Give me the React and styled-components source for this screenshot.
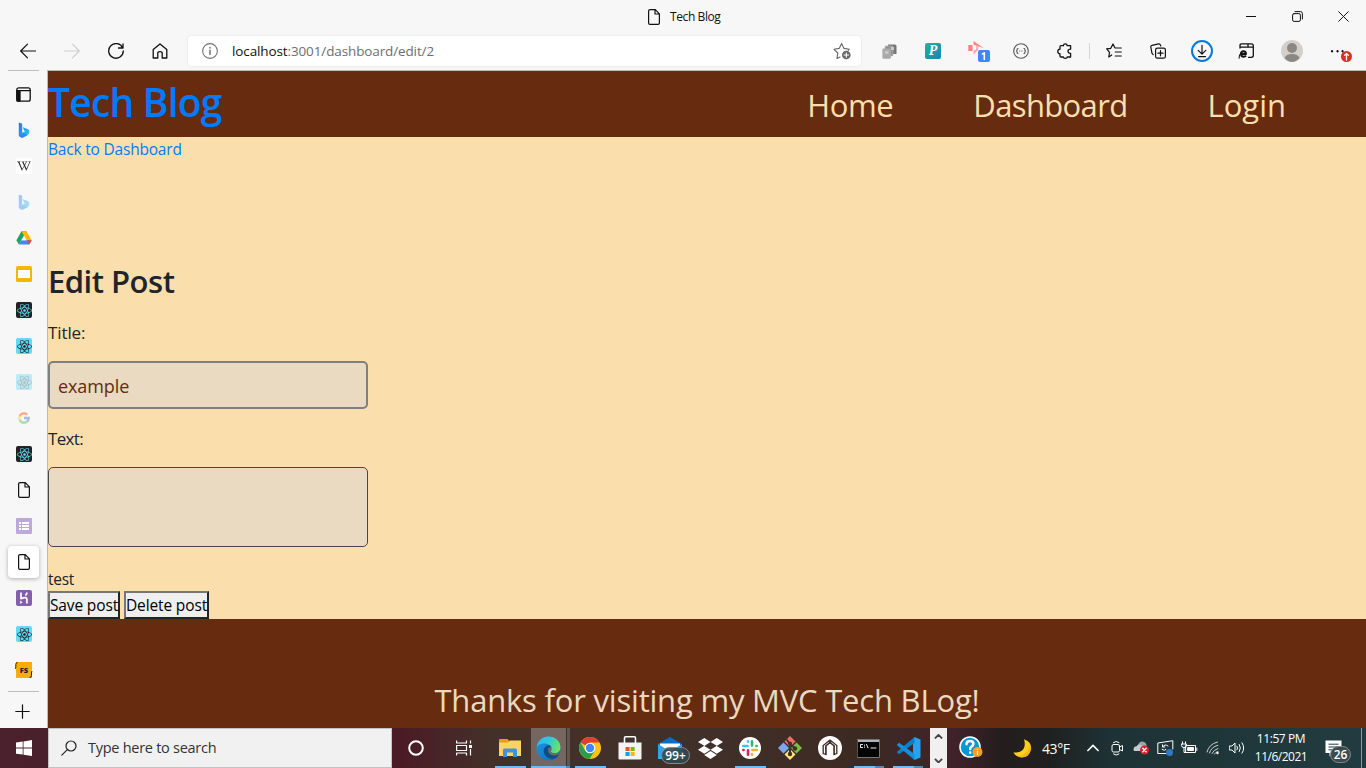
import React from 'react';
import styled, { createGlobalStyle, css } from 'styled-components';
import { FaReact, FaWikipediaW, FaDropbox } from 'react-icons/fa';
import { FcGoogle } from 'react-icons/fc';

const Global = createGlobalStyle`
  *, *::before, *::after { box-sizing: border-box; }
  body {
    margin: 0;
    overflow: hidden;
    font-family: "Open Sans", "Noto Sans", sans-serif;
    background: #f7f7f7;
  }
  svg { display: block; flex: none; }
`;

const Text = styled.span`
  display: block;
  width: max-content;
  white-space: nowrap;
  font-size: ${p => p.$size}px;
  line-height: ${p => p.$lh || p.$size * 1.5}px;
  letter-spacing: ${p => p.$ls || 0}px;
  font-weight: ${p => p.$weight || 400};
  color: ${p => p.$color || 'inherit'};
`;

const Screen = styled.div`
  width: 1366px;
  height: 768px;
  display: flex;
  flex-direction: column;
  background: #f7f7f7;
`;

const TitleBar = styled.div`
  height: 33px;
  display: flex;
  align-items: center;
  padding-left: 648px;
`;
const TabTitle = styled.div`
  display: flex;
  align-items: center;
  gap: 10px;
  flex: 1;
`;
const WindowButtons = styled.div`
  display: flex;
`;
const WindowButton = styled.div`
  width: 46px;
  display: flex;
  justify-content: center;
`;

const Toolbar = styled.div`
  height: 37px;
  display: flex;
  align-items: center;
  padding: 0 0 1px 6px;
`;
const ToolButton = styled.div`
  width: ${p => p.$w || 44}px;
  height: 34px;
  flex: none;
  display: flex;
  align-items: center;
  justify-content: center;
`;
const AddressBar = styled.div`
  width: 673px;
  height: 30px;
  flex: none;
  margin-left: 6px;
  padding: 0 10px 0 14px;
  display: flex;
  align-items: center;
  gap: 14px;
  border-radius: 4px;
  background: #fff;
  box-shadow: 0 0 3px rgba(0, 0, 0, 0.09);
`;
const Url = styled.div`
  flex: 1;
  display: flex;
`;
const ToolDivider = styled.div`
  width: 1px;
  height: 16px;
  flex: none;
  background: #d5d5d5;
`;

const Middle = styled.div`
  height: 658px;
  display: flex;
`;
const Sidebar = styled.aside`
  width: 47px;
  display: flex;
  flex-direction: column;
  align-items: center;
`;
const SideRule = styled.div`
  width: 31px;
  height: 1px;
  flex: none;
  background: #bdbdbd;
`;
const SideTabs = styled.div`
  padding-top: 7px;
  display: flex;
  flex-direction: column;
  gap: 4px;
  height: 620px;
  flex: none;
`;
const SideTab = styled.div`
  width: 31px;
  height: 32px;
  padding-left: 1px;
  display: flex;
  align-items: center;
  justify-content: center;
  border-radius: 4px;
  opacity: ${p => (p.$faded ? 0.4 : 1)};
  ${p => p.$active && css`
    background: #fff;
    box-shadow: 0 1px 4px rgba(0, 0, 0, 0.3);
  `}
`;
const Tile = styled.div`
  width: 16px;
  height: 16px;
  display: flex;
  align-items: center;
  justify-content: center;
  border-radius: 2px;
  background: ${p => p.$bg};
  color: ${p => p.$fg};
  font-size: ${p => p.$size || 15}px;
`;
const NewTab = styled.div`
  height: 36px;
  display: flex;
  align-items: center;
  padding: 3px 2px 0 0;
`;

const Page = styled.main`
  flex: 1;
  height: 658px;
  border-top: 1px solid #bababa;
  border-left: 1px solid #bababa;
  display: flex;
  flex-direction: column;
  background: #fadfad;
  color: #212529;
`;
const Header = styled.header`
  height: 66px;
  display: flex;
  justify-content: space-between;
  align-items: flex-start;
  padding-right: 80px;
  background: #672b10;
`;
const Nav = styled.nav`
  display: flex;
  gap: 80px;
  padding-top: 10px;
`;
const Content = styled.section`
  height: 482px;
  display: flex;
  flex-direction: column;
  align-items: flex-start;
`;
const Heading = styled.div`
  margin-top: 96px;
  height: 49px;
`;
const Field = styled.div`
  display: flex;
  flex-direction: column;
`;
const FieldLabel = styled.div`
  height: 46px;
  padding-top: 4px;
`;
const InputBox = styled.div`
  width: 320px;
  height: 48px;
  padding: 9px 8px;
  border: 2px solid #808080;
  border-radius: 5px;
  background: #e9dac1;
`;
const TextBox = styled(InputBox)`
  height: 80px;
  border: 1px solid #45474a;
`;
const Gap = styled.div`
  height: ${p => p.$h}px;
`;
const Buttons = styled.div`
  display: flex;
  gap: 4px;
`;
const PostButton = styled.div`
  width: ${p => p.$w}px;
  height: 28px;
  display: flex;
  justify-content: center;
  border: 2px solid;
  border-color: #767676 #212529 #212529 #767676;
  background: #efefef;
  color: #000;
`;
const Footer = styled.footer`
  flex: 1;
  display: flex;
  justify-content: center;
  padding-top: 57px;
  background: #672b10;
`;

const Taskbar = styled.div`
  height: 40px;
  display: flex;
  color: #fff;
  background: linear-gradient(90deg, #4b212e 0, #4b1b25 400px, #433029 490px, #41302a 700px, #3c2a22 860px, #40222a 955px, #251d1e 1000px, #202020 1050px, #1d3234 1110px, #213c40 1366px);
`;
const StartButton = styled.div`
  width: 48px;
  display: flex;
  align-items: center;
  justify-content: center;
`;
const Search = styled.div`
  width: 344px;
  height: 40px;
  padding-left: 12px;
  display: flex;
  align-items: center;
  gap: 11px;
  border: 1px solid #c3c3c3;
  background: #f1f1f1;
`;
const TaskItem = styled.div`
  position: relative;
  width: ${p => p.$w || 40}px;
  height: 40px;
  padding-right: ${p => p.$pr || 0}px;
  flex: none;
  display: flex;
  align-items: center;
  justify-content: center;
  ${p => p.$active && css`
    background: linear-gradient(90deg, transparent 1px, #75665f 1px, #75665f 36px, #3d312b 36px, #3d312b 37px, #625650 37px);
  `}
`;
const OpenMark = styled.div`
  position: absolute;
  bottom: 0;
  left: ${p => p.$x}px;
  width: ${p => p.$w}px;
  height: 2px;
  background: ${p => p.$split
    ? `linear-gradient(90deg, #76b9ed ${p.$split}px, #5b87ab ${p.$split}px)`
    : '#76b9ed'};
`;
const CountBadge = styled.div`
  position: absolute;
  left: ${p => p.$x}px;
  top: ${p => p.$y}px;
  width: ${p => p.$w}px;
  height: 17px;
  display: flex;
  align-items: center;
  justify-content: center;
  border: 1px solid #858a8c;
  border-radius: 9px;
  background: ${p => p.$bg};
`;
const Scroller = styled.div`
  width: 17px;
  margin-left: 2px;
  padding: 6px 0 5px;
  display: flex;
  flex-direction: column;
  align-items: center;
  justify-content: space-between;
  background: #f0f0f0;
`;
const Weather = styled.div`
  width: 86px;
  display: flex;
  align-items: center;
  gap: 10px;
  padding-left: 18px;
`;
const Tray = styled.div`
  display: flex;
`;
const Clock = styled.div`
  width: 64px;
  display: flex;
  flex-direction: column;
  align-items: center;
  padding-top: 2px;
`;
const ShowDesktop = styled.div`
  width: 5px;
  border-left: 1px solid #8b9798;
`;

const Icon = ({ w = 16, h, vb, sw = 1, children, color = '#111' }) => (
  <svg width={w} height={h || w} viewBox={vb || `0 0 ${w} ${h || w}`} fill="none" stroke={color} strokeWidth={sw} strokeLinecap="round" strokeLinejoin="round">
    {children}
  </svg>
);

const PageIcon = () => (
  <Icon w={12} h={16} sw={1.2}>
    <path d="M2.2.6H7.3L11.4 4.8V14Q11.4 15.4 10 15.4H2Q.6 15.4 .6 14V2Q.6.6 2.2.6ZM7 .8V5H11.2" />
  </Icon>
);
const BackIcon = () => <Icon sw={1.2}><path d="M15.6 8H.7M7.5 1.2.7 8 7.5 14.8" /></Icon>;
const ForwardIcon = () => <Icon sw={1.2} color="#cfcfcf"><path d="M.4 8H15.3M8.5 1.2 15.3 8 8.5 14.8" /></Icon>;
const ReloadIcon = () => <Icon w={16} sw={1.3}><path d="M14.700 5A7.300 7.300 0 1 0 15.300 8M15 .8V5H10.500" /></Icon>;
const HomeIcon = () => <Icon sw={1.3}><path d="M1.2 6.6 8 .9 14.8 6.6V15H10.2V10.3Q10.2 8.6 8 8.6T5.8 10.3V15H1.2Z" /></Icon>;
const InfoIcon = () => <Icon color="#727272" sw={1.1}><circle cx="8" cy="8" r="7.4" /><path d="M8 7.2V11.4M8 4.6V5" strokeWidth="1.5" /></Icon>;
const AddFavIcon = () => (
  <Icon w={18} color="#666" sw={1.1}>
    <path d="M7 15 4 16.4 4.8 11 1 7.3 6.2 6.4 8.6 1.5 11 6.4 16.3 7.2 15.2 8.4" />
    <circle cx="13.3" cy="13" r="4.3" fill="#666" stroke="none" />
    <path d="M13.3 10.7V15.3M11 13H15.6" stroke="#fff" />
  </Icon>
);
const CopiesIcon = () => (
  <Icon w={15} h={15} color="none">
    <path d="M6 .5H13Q14.5 .5 14.5 2V10H7Z" fill="#777" />
    <rect x="3" y="2" width="8" height="10" rx="1" fill="#929292" stroke="#bbb" strokeWidth=".6" />
    <rect x=".4" y="4.5" width="8.5" height="10.2" rx="1" fill="#aaa" />
    <path d="M3 7H6.5V10H3ZM9 3H12V6H9Z" fill="#c8c8c8" />
  </Icon>
);
const PTile = styled(Tile)`
  background: linear-gradient(135deg, #27b39a, #1783b4);
  font: italic bold 14px "Liberation Serif", serif;
`;
const RecorderIcon = () => (
  <Icon w={22} h={22} color="none">
    <path d="M.3 5H4.500V11H.3Z" fill="#ff7f7f" />
    <path d="M5.500 1V4.500L8 5.500 15.800 8.300Z" fill="#ff7f7f" />
    <path d="M5.500 14.500V11L8 9.500 8.500 5 10.500 6 10 10Z" fill="#ffa5a5" />
    <rect x="10" y="10" width="12" height="12" rx="2" fill="#3f86f7" />
    <path d="M14.5 14 16.3 12.8V19.5" stroke="#fff" strokeWidth="1.6" />
  </Icon>
);
const BracesIcon = () => <Icon color="#555" sw={1.1}><circle cx="8" cy="8" r="7.3" /><path d="M5 5.5Q4 5.5 4.2 7L3.5 8 4.2 9Q4 10.5 5 10.5M11 5.5Q12 5.5 11.8 7L12.5 8 11.8 9Q12 10.5 11 10.5" /><path d="M6.2 8H9.8" strokeDasharray="1 1.2" strokeLinecap="butt" /></Icon>;
const PuzzleIcon = () => <Icon sw={1.3}><path d="M4 2.600H6.400Q6.500.8 8.300.8T10.200 2.600H13.600V6.200Q11 6.200 11 8.300T13.600 10.300V14H10.300Q10.200 15.300 8.300 15.300T6.300 14H4Q3 14 3 13V10.800Q.8 10.500.8 8.400T3 6.200V3.600Q3 2.600 4 2.600Z" /></Icon>;
const FavoritesIcon = () => <Icon sw={1.2}><path d="M5.7 12 2.8 14 3.5 9.3.7 5.8 4.8 5.3 7 1 9 5H15.3M9.3 9H15.3M9.3 13H15.3" /></Icon>;
const CollectionsIcon = () => <Icon sw={1.2}><path d="M3.2 11.6 2 10.3.8 4Q.6 2.6 2 2.3L8.6 .8Q10 .6 10.4 2L10.8 3" /><rect x="5.6" y="5.2" width="9.8" height="10" rx="1.8" /><path d="M10.5 7.6V12.8M7.9 10.2H13.1" /></Icon>;
const DownloadIcon = () => <Icon w={22}><circle cx="11" cy="11" r="10" stroke="#0a78d4" strokeWidth="2" /><path d="M11 5.3V14M7.2 10.4 11 14.2 14.8 10.4M7.5 16.6H14.5" strokeWidth="1.2" /></Icon>;
const IeIcon = () => (
  <Icon>
    <path d="M2 5V2.500Q2 .8 3.500 .8H13Q15.300 .8 15.300 2.600V12.500Q15.300 14.300 13.300 14.300H10.500M2.500 4.200H15M10 1V4" strokeWidth="1.300" />
    <path d="M3 11H8Q7.900 8.300 5.500 8.300T3 11Q3 13.700 5.600 13.700 7.200 13.700 8 12.700" strokeWidth="2" strokeLinecap="butt" /><path d="M1 15.300Q.3 12 4 8.500" strokeWidth="1" />
  </Icon>
);
const AvatarIcon = () => (
  <Icon w={22} color="none"><circle cx="11" cy="11" r="11" fill="#d3d0cc" /><circle cx="11" cy="8" r="5" fill="#8b8784" /><path d="M3.5 18Q5 14 11 14T18.5 18Q15 22 11 22T3.5 18Z" fill="#8b8784" /></Icon>
);
const MenuIcon = () => (
  <Icon w={22} h={22} color="none">
    <path d="M2 10a1.2 1.2 0 1 0 .1 0M7.500 10a1.200 1.200 0 1 0 .1 0M12.500 10a1.200 1.200 0 1 0 .1 0" fill="#111" />
    <circle cx="16.500" cy="16.500" r="5.500" fill="#d93025" /><path d="M16.500 20V13.500M14.700 15.200 16.500 13.400 18.300 15.200" stroke="#fff" strokeWidth="1.300" />
  </Icon>
);
const TabsIcon = () => <Icon w={16} h={15} sw={1.3}><rect x=".8" y=".8" width="13.4" height="13.4" rx="2" /><path d="M1 3.600H14" /><path d="M1 3.600H4V14H1Z" fill="#111" /></Icon>;
const BingIcon = () => (
  <Icon w={12} h={16} color="none">
    <defs><linearGradient id="bing" x1="0" y1="0" x2="1" y2=".6"><stop offset="0" stopColor="#2870e8" /><stop offset="1" stopColor="#28c4f4" /></linearGradient></defs>
    <path d="M.8.4 4.200 1.800V10.700L7.400 9.200 6 8.500 4.900 5.200 10.200 7.200Q12 8.300 11.400 10.800 11 12.300 9.500 13.100L4.500 15.800Q2.500 15.800 .8 14Z" fill="url(#bing)" />
    <path d="M.8 13 6 11.500 9.800 12.900 4.500 15.800Q2 15.800 .8 13Z" fill="#2a8cf4" />
  </Icon>
);
const DriveIcon = () => (
  <Icon w={16} h={16} color="none">
    <path d="M5.500 1.300H10.500L8 5.700 2.900 14.400.4 10.200Z" fill="#1ea362" /><path d="M5.500 1.300H10.500L15.700 10.200H10.500Z" fill="#ffba00" /><path d="M5.400 10.200H15.700L13.200 14.500H2.900Z" fill="#4285f4" /><path d="M10.800 10.200H15.700L13.200 14.500Z" fill="#ea4335" /><path d="M8 6 5.500 10.200H10.500Z" fill="#f7f7f7" />
  </Icon>
);
const SlidesIcon = () => <Icon color="none"><rect width="16" height="16" rx="1.500" fill="#f6b704" /><rect x="2" y="4" width="12" height="8" fill="#fff" /></Icon>;
const FormsIcon = () => <Icon color="none"><rect width="16" height="16" rx="1" fill="#bda8dc" /><path d="M3 4H5V6H3ZM3 7H5V9H3ZM3 10H5V12H3ZM6 4H13V6H6ZM6 7H13V9H6ZM6 10H13V12H6Z" fill="#fff" /></Icon>;
const HerokuIcon = () => <Icon color="none"><rect width="16" height="16" rx="2" fill="#8460aa" /><path d="M5 2.500V8.600Q10.900 6.200 10.900 9.300V13.500M10.900 2.500Q10.800 4.300 9.400 5.500" stroke="#fff" strokeWidth="1.700" strokeLinecap="butt" /><path d="M4.200 10.500 6.500 12.200 4.200 14Z" fill="#fff" /></Icon>;
const FsTile = styled(Tile)`
  position: relative;
  background: #ffab00;
  color: #222;
  font: 800 7.500px/16px "Open Sans", sans-serif;
  border-radius: 0;
`;
const FsFrame = styled.svg`
  position: absolute;
  left: -1px;
`;
const FsIcon = () => (
  <FsTile>FS<FsFrame width="18" height="16" viewBox="0 0 18 16" fill="none" stroke="#222" strokeWidth="1"><path d="M2.500 .5Q.8.5.8 2.500V5Q.8 6.500.2 7M14.500 15.500Q16.500 15.500 16.500 13.500V11Q16.500 9.500 17.300 9" /></FsFrame></FsTile>
);
const PlusIcon = () => <Icon w={15} sw={1.2}><path d="M7.500 .8V14.200M.8 7.500H14.200" /></Icon>;

const WindowsIcon = () => <Icon w={16} color="none"><path d="M0 2.400 6.700 1.500V7.600H0ZM7.500 1.400 16 .1V7.600H7.500ZM0 8.400H6.700V14.600L0 13.700ZM7.500 8.400H16V16L7.500 14.700Z" fill="#fff" /></Icon>;
const SearchIcon = () => <Icon w={16} h={16} color="#222" sw={1.2}><circle cx="10" cy="6" r="5" /><path d="M6.300 9.700.8 15.200" /></Icon>;
const CortanaIcon = () => <Icon w={16} color="#fff" sw={2}><circle cx="8" cy="8" r="6.800" /></Icon>;
const TaskViewIcon = () => <Icon w={16} color="#fff" sw={1.2}><path d="M.6 .6V3H10.500V.6M.6 5.500H10.500V10.500H.6ZM.6 15.400V13H10.500V15.400M14.500 .6V3.500M14.500 9V15.400" strokeLinecap="butt" /><rect x="13" y="5" width="3" height="3" fill="#fff" stroke="none" /></Icon>;
const ExplorerIcon = () => <Icon w={22} h={18} color="none"><path d="M0 1Q0 0 1 0H8.500L10.500 2V5H0Z" fill="#e5a00b" /><path d="M0 3.500H9L11 1.500H22V17H0Z" fill="#fcd462" /><path d="M4 18V11Q4 9.500 5.500 9.500H16.500Q18 9.500 18 11V18H14V13.500H8V18Z" fill="#3f93d8" /></Icon>;
const EdgeIcon = () => (
  <Icon w={25} h={25} vb="0 0 24 24" color="none">
    <defs>
      <linearGradient id="eg1" x1="0" y1=".3" x2="1" y2=".6"><stop offset="0" stopColor="#35b6f0" /><stop offset=".5" stopColor="#32cbd2" /><stop offset="1" stopColor="#76e257" /></linearGradient>
      <linearGradient id="eg2" x1="0" y1="0" x2="1" y2="1"><stop offset="0" stopColor="#1b9de2" /><stop offset="1" stopColor="#0f65b6" /></linearGradient>
    </defs>
    <circle cx="12" cy="12" r="11.500" fill="url(#eg2)" />
    <path d="M.7 10.500C1.500 5 6 .5 12 .5 18.500.5 23.500 5 23.500 11 23.500 14.500 20.800 16.500 18 16.500 15.500 16.500 13.700 15.600 14.500 14.200 16 11.500 13.500 7.500 8.500 7.200 5 7 2 8.400.7 10.500Z" fill="url(#eg1)" />
    <path d="M12.800 8.700C8 9.500 6 14 8.500 18 10.500 21.300 14.800 22.500 18.700 21.300 20.500 20 21.800 18.800 22.300 17.300 18 20 11.500 18.500 11.700 13.500 11.700 11.500 12.500 10.500 14.600 11.500 14.500 10 13.800 9.200 12.800 8.700Z" fill="#114a8b" />
    <path d="M14.600 11.200C12.800 10.500 11.700 11.700 11.700 13.500 11.500 18.500 18 20 22.300 17.300 23 16.500 22.500 16 22 16.200 18.500 17.600 14 16.500 14.200 14.700 14.900 13.600 15 12.500 14.600 11.200Z" fill="#75665f" />
  </Icon>
);
const ChromeIcon = () => (
  <Icon w={22} h={22} vb="0 0 22 22" color="none">
    <circle cx="11" cy="11" r="11" fill="#fbc116" />
    <path d="M11 11 1.500 5.500A11 11 0 0 1 20.500 5.500H11Z" fill="#df3f32" />
    <path d="M1.500 5.500A11 11 0 0 0 10.500 22L15.700 13.700 6.300 13.700Z" fill="#2c9e4b" />
    <circle cx="11" cy="11" r="5.300" fill="#fff" /><circle cx="11" cy="11" r="4.200" fill="#4285f4" />
  </Icon>
);
const StoreIcon = () => <Icon w={24} h={24} color="none"><path d="M6.500 7V2Q6.500 .8 7.700.8H16.300Q17.500 .8 17.500 2V7" stroke="#fff" strokeWidth="1.600" /><path d="M.5 6.500H23.500V22.500Q23.500 23.500 22.500 23.500H1.500Q.5 23.500.5 22.500Z" fill="#f4f4f4" /><path d="M7.500 11H11.600V15H7.500Z" fill="#f25022" /><path d="M12.600 11H16.700V15H12.600Z" fill="#7fba00" /><path d="M7.500 16H11.600V20H7.500Z" fill="#00a4ef" /><path d="M12.600 16H16.700V20H12.600Z" fill="#ffb900" /></Icon>;
const MailIcon = () => <Icon w={24} h={22} color="none"><path d="M0 7 12 0 24 7V22H0Z" fill="#0a6ec5" /><path d="M2 6.500H22V15H2Z" fill="#fff" /><path d="M0 7 12 14.500 24 7V22H0Z" fill="#28a8ea" /><path d="M0 22 12 14 24 22Z" fill="#39bdf3" /></Icon>;
const SlackIcon = () => (
  <Icon w={22} color="none">
    <circle cx="11" cy="11" r="11" fill="#fff" />
    <g strokeWidth="2.600">
      <path d="M4.300 9H8.600M9 4.300V4.600" stroke="#36c5f0" />
      <path d="M13 4.300V8.600M17.400 9H17.700" stroke="#2eb67d" />
      <path d="M13.400 13H17.700M13 17.400V17.700" stroke="#ecb22e" />
      <path d="M9 13.400V17.700M4.300 13H4.600" stroke="#e01e5a" />
    </g>
  </Icon>
);
const GitIcon = () => (
  <Icon w={24} color="none">
    <path d="M12 0 17.500 5.500 12 11 6.500 5.500Z" fill="#ef6f67" /><path d="M18.500 6.500 24 12 18.500 17.500 13 12Z" fill="#7ac143" /><path d="M12 13 17.500 18.500 12 24 6.500 18.500Z" fill="#ffe27a" /><path d="M5.500 6.500 11 12 5.500 17.500 0 12Z" fill="#7ba7ee" />
    <path d="M9 4 12 8V18M12 8 16.500 12" stroke="#413029" strokeWidth="2" /><g fill="#413029"><circle cx="12" cy="7.500" r="2" /><circle cx="12" cy="18" r="2.200" /><circle cx="17" cy="12.500" r="2.200" /></g>
  </Icon>
);
const ArchIcon = () => (
  <Icon w={24} color="none">
    <circle cx="12" cy="12" r="12" fill="#fff" />
    <path d="M7.800 18.500 5.200 17.500V9.500L11.300 4.500V7L7.800 9.800ZM16.200 18.500 18.800 17.500V9.500L12.700 4.500V7L16.200 9.800Z" stroke="#3e2b24" strokeWidth="1.300" fill="#fff" strokeLinejoin="miter" />
    <path d="M8 18.500V10L12 6.800 16 10V18.500" stroke="#3e2b24" strokeWidth="1" strokeLinejoin="miter" />
  </Icon>
);
const CmdIcon = () => (
  <Icon w={23} h={19} color="none"><rect x=".5" y=".5" width="22" height="18" fill="#050505" stroke="#777" /><path d="M1 1H22V3H1Z" fill="#aeb4b8" /><path d="M5.500 5.500H3.500V8.500H5.500M7.500 6V6.300M7.500 8V8.300M9.500 5.500 11 8.800M14 9H19" stroke="#eee" strokeWidth="1" /></Icon>
);
const VsCodeIcon = () => (
  <Icon w={25} h={25} vb="0 0 25 25" color="none">
    <path d="M18.500 1 24.500 3.500V21.500L18.500 24 17 22V3Z" fill="#24a3ee" /><path d="M18.500 1V7L3.200 18.200 1 16.400V15.700Z" fill="#0d7fca" /><path d="M18.500 24V18L3.200 6.800 1 8.600V9.300Z" fill="#1390da" />
  </Icon>
);
const HelpIcon = () => (
  <Icon w={24} color="none">
    <circle cx="11" cy="11" r="10" fill="#0797d5" stroke="#fff" strokeWidth="1.600" />
    <path d="M7.500 8.200Q7.700 5 11 5T14.400 7.800Q14.400 9.500 12.500 10.600 11.200 11.300 11.200 13M11.200 16.500V16.600" stroke="#fff" strokeWidth="2.600" />
    <circle cx="18.500" cy="16" r="5" fill="#f5a11d" /><path d="M18.500 15.500V18.500M18.500 13.300V13.400" stroke="#fff" strokeWidth="1.300" />
  </Icon>
);
const Chevron = ({ up, w = 9, color, sw = 2 }) => <Icon w={w} h={w * 0.6} vb="0 0 10 6" color={color} sw={sw}><path d={up ? 'M1 5 5 1 9 5' : 'M1 1 5 5 9 1'} strokeLinecap="butt" /></Icon>;
const MoonIcon = () => <Icon w={19} h={19} color="none"><path d="M11 .3Q19 3 18 10.500 16 18.500 8.500 18.600 3 18 .3 13.500 10 14 11.500 7.500 12.200 3.500 11 .3Z" fill="#fccf1c" /><path d="M16.500 5Q17 13 8 17 4 17 1 14.200 4 18.800 9 18.500 16.500 18 18 10.500 18.300 7.500 16.500 5Z" fill="#f3a515" opacity=".6" /></Icon>;
const MeetIcon = () => <Icon w={13} h={16} color="#fff"><rect x="1" y="4.500" width="7.500" height="7.500" rx="1.500" /><path d="M8.500 7 11.500 5.500V11L8.500 9.500M2.500 2.500Q5 .3 8 2.500M2.500 14Q5 16.300 8 14" /></Icon>;
const CloudIcon = () => <Icon w={17} h={14} color="none"><path d="M5 4Q6.500.4 9.500.6 13 1 13.500 4.500V8H4Z" fill="#9ea5a7" /><path d="M1 10Q-.5 6 3.500 5.300 5 2.800 8.500 4L11 7V10Z" fill="#c7cbcc" /><circle cx="11.500" cy="9" r="4.500" fill="#d4232e" /><path d="M9.800 7.300 13.200 10.700M13.200 7.300 9.800 10.700" stroke="#fff" strokeWidth="1.400" /></Icon>;
const SyncIcon = () => <Icon w={17} h={16} color="#fff"><path d="M9 13.500H.8V3L15.800.7V9" /><path d="M11 6Q8 3.500 5.700 6.700M5.500 4.800V7H7.800M5 9.300Q7.500 11.500 9 9.500" /><circle cx="12.500" cy="12.500" r="3.500" fill="#2e78c8" stroke="none" /></Icon>;
const BatteryIcon = () => <Icon w={17} h={14} color="#fff"><path d="M1.500.8V3M4.500.8V3M.6 3H5.400V5Q5.400 6.500 3 6.500T.6 5ZM3 6.500V11.500H4.500" /><rect x="5" y="4.500" width="9.500" height="7" /><path d="M7 6.500H12.500V9.500H7Z" fill="#fff" /><path d="M15.800 7V9.500" /></Icon>;
const WifiIcon = () => <Icon w={14} h={14} color="#c9d0d1"><path d="M1 11Q3 3 11.500 1M3.500 12Q5 6 11.800 4.300M6 12.500Q7.300 9 12 7.500M8.500 13Q9.500 11 12 10.500" /><circle cx="11.500" cy="12" r="1.200" fill="#fff" stroke="none" /></Icon>;
const VolumeIcon = () => <Icon w={17} h={14} color="#fff"><path d="M.7 5H3L6 2V12L3 9H.7ZM8 5.200Q9.200 7 8 8.800M10.300 3.500Q12.500 7 10.300 10.500M13 1.800Q16.500 7 13 12.200" /></Icon>;
const NotesIcon = () => <Icon w={17} h={17} color="none"><path d="M.5 .5H16.500V13H8L4.500 16.500V13H.5Z" fill="#fff" /><path d="M3.500 4.200H13.500M3.500 7H13.500M3.500 9.800H9" stroke="#213c40" strokeLinecap="butt" /></Icon>;

const tabs = [
  { icon: <TabsIcon /> },
  { icon: <BingIcon /> },
  { icon: <Tile $bg="#fff" $fg="#222"><FaWikipediaW size={14} /></Tile> },
  { icon: <BingIcon />, faded: true },
  { icon: <DriveIcon /> },
  { icon: <SlidesIcon /> },
  { icon: <Tile $bg="#222" $fg="#61dafb"><FaReact /></Tile> },
  { icon: <Tile $bg="#61dafb" $fg="#222"><FaReact /></Tile> },
  { icon: <Tile $bg="#61dafb" $fg="#555"><FaReact /></Tile>, faded: true },
  { icon: <FcGoogle size={14} />, faded: true },
  { icon: <Tile $bg="#222" $fg="#61dafb"><FaReact /></Tile> },
  { icon: <PageIcon /> },
  { icon: <FormsIcon /> },
  { icon: <PageIcon />, active: true },
  { icon: <HerokuIcon /> },
  { icon: <Tile $bg="#61dafb" $fg="#222"><FaReact /></Tile> },
  { icon: <FsIcon /> },
];

const navLinks = [
  { label: 'Home', spacing: -0.4 },
  { label: 'Dashboard', spacing: -0.65 },
  { label: 'Login', spacing: 0 },
];

export default function App() {
  return (
    <Screen>
      <Global />
      <TitleBar>
        <TabTitle><PageIcon /><Text $size={12} $ls={-0.4} $color="#111">Tech Blog</Text></TabTitle>
        <WindowButtons>
          <WindowButton><Icon w={10}><path d="M0 5.500H10" strokeLinecap="butt" /></Icon></WindowButton>
          <WindowButton><Icon w={11}><rect x=".6" y="2.600" width="7.800" height="7.800" rx="1.500" /><path d="M3 .6H8.500Q10.400.6 10.400 2.500V8" /></Icon></WindowButton>
          <WindowButton><Icon w={11}><path d="M.7.7 10.300 10.300M10.300.7.7 10.300" /></Icon></WindowButton>
        </WindowButtons>
      </TitleBar>
      <Toolbar>
        <ToolButton><BackIcon /></ToolButton>
        <ToolButton><ForwardIcon /></ToolButton>
        <ToolButton><ReloadIcon /></ToolButton>
        <ToolButton><HomeIcon /></ToolButton>
        <AddressBar>
          <InfoIcon />
          <Url><Text $size={13.5} $ls={-0.12} $color="#111">localhost</Text><Text $size={13.5} $ls={-0.12} $color="#6e6e6e">:3001/dashboard/edit/2</Text></Url>
          <AddFavIcon />
        </AddressBar>
        <ToolButton $w={56}><CopiesIcon /></ToolButton>
        <ToolButton $w={32}><PTile $fg="#fff">P</PTile></ToolButton>
        <ToolButton $w={60}><RecorderIcon /></ToolButton>
        <ToolButton $w={24}><BracesIcon /></ToolButton>
        <ToolButton $w={64}><PuzzleIcon /></ToolButton>
        <ToolDivider style={{ marginLeft: -8 }} />
        <ToolButton $w={48}><FavoritesIcon /></ToolButton>
        <ToolButton $w={40}><CollectionsIcon /></ToolButton>
        <ToolButton $w={48}><DownloadIcon /></ToolButton>
        <ToolButton $w={40}><IeIcon /></ToolButton>
        <ToolButton $w={52}><AvatarIcon /></ToolButton>
        <ToolButton $w={46}><MenuIcon /></ToolButton>
      </Toolbar>
      <Middle>
        <Sidebar>
          <SideRule />
          <SideTabs>
            {tabs.map((t, i) => <SideTab key={i} $faded={t.faded} $active={t.active}>{t.icon}</SideTab>)}
          </SideTabs>
          <SideRule />
          <NewTab><PlusIcon /></NewTab>
        </Sidebar>
        <Page>
          <Header>
            <Text $size={39} $lh={61} $ls={-0.8} $weight={600} $color="#007bff">Tech Blog</Text>
            <Nav>
              {navLinks.map(l => <Text key={l.label} $size={31} $lh={48} $ls={l.spacing} $color="#fadfad">{l.label}</Text>)}
            </Nav>
          </Header>
          <Content>
            <Text $size={15.5} $lh={24} $ls={-0.2} $color="#007bff">Back to Dashboard</Text>
            <Heading><Text $size={31} $lh={49} $ls={-0.5} $weight={600}>Edit Post</Text></Heading>
            <Gap $h={9} />
            <Field>
              <FieldLabel><Text $size={17} $lh={27} $ls={-0.1}>Title:</Text></FieldLabel>
              <InputBox><Text $size={18} $lh={28} $ls={-0.1} $color="#672b10">example</Text></InputBox>
            </Field>
            <Gap $h={12} />
            <Field>
              <FieldLabel><Text $size={17} $lh={27} $ls={-0.65}>Text:</Text></FieldLabel>
              <TextBox />
            </Field>
            <Gap $h={20} />
            <Text $size={15.5} $lh={24} $ls={-0.25}>test</Text>
            <Buttons>
              <PostButton $w={72}><Text $size={15.5} $lh={24} $ls={-0.13}>Save post</Text></PostButton>
              <PostButton $w={85}><Text $size={15.5} $lh={24} $ls={-0.13}>Delete post</Text></PostButton>
            </Buttons>
          </Content>
          <Footer><Text $size={31} $lh={48} $ls={-0.2} $color="#e9dac1">Thanks for visiting my MVC Tech BLog!</Text></Footer>
        </Page>
      </Middle>
      <Taskbar>
        <StartButton><WindowsIcon /></StartButton>
        <Search><SearchIcon /><Text $size={14.5} $ls={-0.27} $color="#333">Type here to search</Text></Search>
        <TaskItem $w={48}><CortanaIcon /></TaskItem>
        <TaskItem $w={50} $pr={3}><TaskViewIcon /></TaskItem>
        <TaskItem><ExplorerIcon /><OpenMark $x={5} $w={31} /></TaskItem>
        <TaskItem $active $pr={3}><EdgeIcon /><OpenMark $x={1} $w={39} $split={35} /></TaskItem>
        <TaskItem><ChromeIcon /><OpenMark $x={5} $w={31} /></TaskItem>
        <TaskItem $pr={1}><StoreIcon /></TaskItem>
        <TaskItem><MailIcon /><CountBadge $x={11} $y={19} $w={29} $bg="rgba(52,72,80,.9)"><Text $size={12} $weight={600} $lh={15}>99+</Text></CountBadge></TaskItem>
        <TaskItem><FaDropbox size={25} /></TaskItem>
        <TaskItem><SlackIcon /><OpenMark $x={5} $w={31} /></TaskItem>
        <TaskItem><GitIcon /></TaskItem>
        <TaskItem><ArchIcon /></TaskItem>
        <TaskItem $w={39} $pr={2}><CmdIcon /><OpenMark $x={4} $w={30} $split={21} /></TaskItem>
        <TaskItem $w={39} $pr={1}><VsCodeIcon /><OpenMark $x={4} $w={30} $split={21} /></TaskItem>
        <Scroller><Chevron up color="#444" /><Chevron color="#444" /></Scroller>
        <TaskItem $w={48}><HelpIcon /></TaskItem>
        <Weather><MoonIcon /><Text $size={14} $ls={-0.4}>43°F</Text></Weather>
        <Tray>
          <TaskItem $w={24}><Chevron up w={14} sw={1.1} color="#fff" /></TaskItem>
          <TaskItem $w={24}><MeetIcon /></TaskItem>
          <TaskItem $w={24}><CloudIcon /></TaskItem>
          <TaskItem $w={24}><SyncIcon /></TaskItem>
          <TaskItem $w={24}><BatteryIcon /></TaskItem>
          <TaskItem $w={24}><WifiIcon /></TaskItem>
          <TaskItem $w={24}><VolumeIcon /></TaskItem>
        </Tray>
        <Clock><Text $size={12} $ls={-0.4} $lh={18}>11:57 PM</Text><Text $size={12} $ls={-0.5} $lh={18}>11/6/2021</Text></Clock>
        <TaskItem $w={48} $pr={8}><NotesIcon /><CountBadge $x={17} $y={18} $w={21} $bg="#3a4a4e"><Text $size={12} $weight={600} $lh={15}>26</Text></CountBadge></TaskItem>
        <ShowDesktop />
      </Taskbar>
    </Screen>
  );
}
